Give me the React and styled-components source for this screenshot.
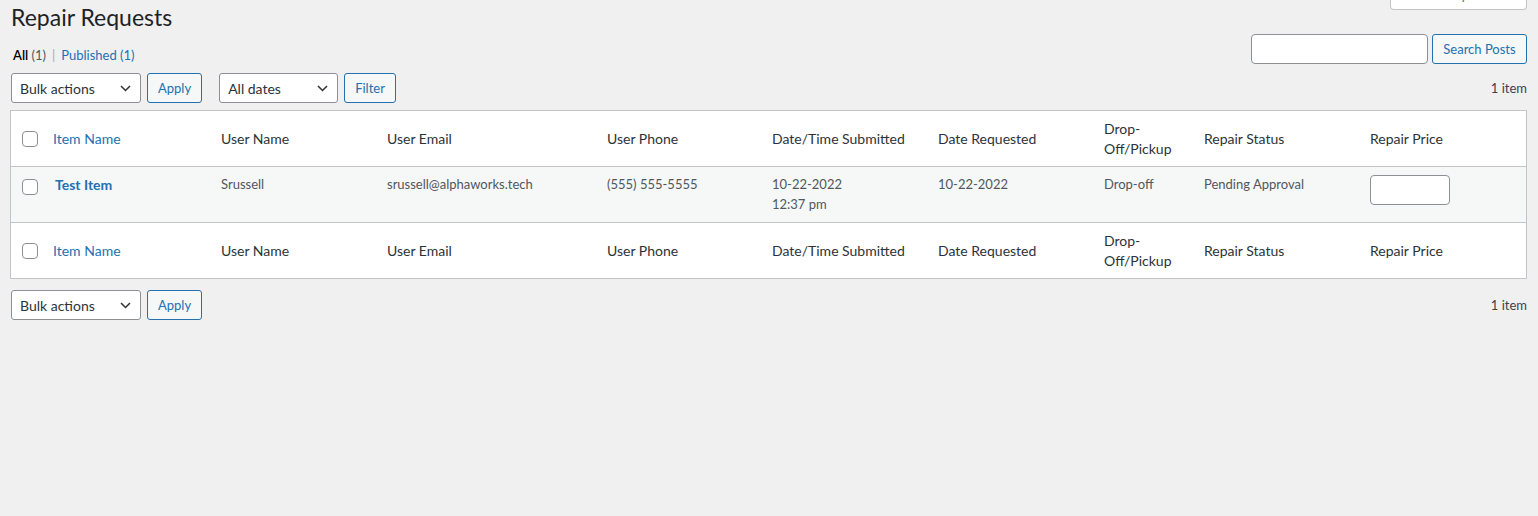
import React from 'react';
import styled, { createGlobalStyle } from 'styled-components';

const Global = createGlobalStyle`
  html, body { margin: 0; padding: 0; background: #f0f0f1; }
  body { font-family: Lato, "Liberation Sans", sans-serif; color: #3c434a; font-size: 13px; }
  * { box-sizing: border-box; }
`;

const Wrap = styled.div`
  padding: 0 11px 0 10px;
`;

const HeaderRow = styled.div`
  display: flex;
  justify-content: space-between;
  align-items: flex-start;
  height: 34px;
`;

const Title = styled.h1`
  margin: 2px 0 0 1px;
  font-size: 23px;
  font-weight: 400;
  line-height: 30px;
  color: #1d2327;
`;

const ScreenTab = styled.button`
  margin-top: -20px;
  width: 137px;
  height: 30px;
  background: #fff;
  border: 1px solid #c3c4c7;
  border-top: none;
  border-radius: 0 0 4px 4px;
  font-family: inherit;
  font-size: 13px;
  line-height: 26px;
  color: #646970;
  padding: 0;
`;

const SubRow = styled.div`
  display: flex;
  justify-content: space-between;
  align-items: flex-start;
  height: 30px;
`;

const Subsub = styled.ul`
  display: flex;
  list-style: none;
  margin: 12px 0 0 3px;
  padding: 0;
  font-size: 13px;
  line-height: 18px;
  color: #646970;
`;

const SubItem = styled.li`
  white-space: pre;
`;

const SubLink = styled.a`
  color: ${p => (p.$current ? '#000' : '#2271b1')};
  font-weight: ${p => (p.$current ? 600 : 400)};
  text-decoration: none;
`;

const Count = styled.span`
  color: ${p => (p.$current ? '#50575e' : '#2271b1')};
  font-weight: 400;
`;

const Sep = styled.span`
  color: #a7aaad;
  padding: 0 6px;
`;

const SearchBox = styled.div`
  display: flex;
  gap: 4px;
`;

const TextInput = styled.input`
  width: ${p => p.$w}px;
  height: 30px;
  border: 1px solid #8c8f94;
  border-radius: 4px;
  background: #fff;
  padding: 0 8px;
  font-family: inherit;
  font-size: 14px;
  margin: 0;
`;

const Button = styled.button`
  height: 30px;
  padding: 0 10px;
  border: 1px solid #2271b1;
  border-radius: 3px;
  background: #f6f7f7;
  color: #2271b1;
  font-family: inherit;
  font-size: 13px;
  line-height: 28px;
  white-space: nowrap;
  min-width: ${p => p.$w || 0}px;
  margin: 0;
`;

const TableNav = styled.div`
  display: flex;
  align-items: center;
  height: 30px;
  padding-left: 1px;
  margin-top: ${p => p.$top}px;
`;

const Actions = styled.div`
  display: flex;
  align-items: center;
  gap: 6px;
  margin-right: 17px;
`;

const Select = styled.div`
  display: flex;
  align-items: center;
  justify-content: space-between;
  width: ${p => p.$w}px;
  height: 30px;
  padding: 0 9px 0 8px;
  border: 1px solid #8c8f94;
  border-radius: 3px;
  background: #fff;
  font-size: 14px;
  color: #2c3338;
`;

const Chevron = () => (
  <svg width="11" height="7" viewBox="0 0 11 7" fill="none">
    <polyline points="1,1 5.5,5.5 10,1" stroke="#2c3338" strokeWidth="1.5" />
  </svg>
);

const Items = styled.div`
  margin-left: auto;
  font-size: 13px;
  color: #3c434a;
`;

const Table = styled.table`
  width: 100%;
  margin-top: 7px;
  table-layout: fixed;
  border-collapse: separate;
  border-spacing: 0;
  border: 1px solid #c3c4c7;
  background: #fff;
`;

const Col = styled.col`
  width: ${p => p.$w}px;
`;

const Th = styled.th`
  text-align: left;
  vertical-align: middle;
  font-weight: 400;
  font-size: 14px;
  line-height: 19.5px;
  color: #2c3338;
  padding: 8px 10px;
  border-bottom: ${p => (p.$foot ? 'none' : '1px solid #c3c4c7')};
  border-top: ${p => (p.$foot ? '1px solid #c3c4c7' : 'none')};
`;

const CheckTh = styled(Th)`
  padding: 0 0 0 11px;
`;

const SortLink = styled.a`
  color: #2271b1;
  text-decoration: none;
`;

const Row = styled.tr`
  background: #f6f7f7;
`;

const Td = styled.td`
  vertical-align: top;
  font-size: 13px;
  line-height: 19.5px;
  color: #50575e;
  padding: 8px 10px;
`;

const CheckTd = styled.th`
  vertical-align: top;
  text-align: left;
  padding: 12px 0 0 11px;
`;

const PrimaryTd = styled(Td)`
  padding-left: 12px;
`;

const RowTitle = styled.a`
  font-size: 14px;
  font-weight: 700;
  color: #2271b1;
  text-decoration: none;
`;

const Checkbox = styled.input.attrs({ type: 'checkbox' })`
  appearance: none;
  display: block;
  width: 16px;
  height: 16px;
  margin: 0;
  border: 1px solid #8c8f94;
  border-radius: 4px;
  background: #fff;
`;

const PriceInput = styled(TextInput)`
  display: block;
`;

const widths = [32, 168, 166, 220, 165, 166, 166, 100, 166, 166];

const headings = [
  'User Name',
  'User Email',
  'User Phone',
  'Date/Time Submitted',
  'Date Requested',
  'Drop-Off/Pickup',
  'Repair Status',
  'Repair Price',
];

const HeadRow = ({ foot }) => (
  <tr>
    <CheckTh $foot={foot}>
      <Checkbox />
    </CheckTh>
    <Th $foot={foot}>
      <SortLink href="#">Item Name</SortLink>
    </Th>
    {headings.map(h => (
      <Th key={h} $foot={foot}>{h}</Th>
    ))}
  </tr>
);

export default function App() {
  return (
    <Wrap>
      <Global />
      <HeaderRow>
        <Title>Repair Requests</Title>
        <ScreenTab>Screen Options ▾</ScreenTab>
      </HeaderRow>
      <SubRow>
        <Subsub>
          <SubItem>
            <SubLink $current href="#">All <Count $current>(1)</Count></SubLink>
            <Sep>|</Sep>
          </SubItem>
          <SubItem>
            <SubLink href="#">Published <Count>(1)</Count></SubLink>
          </SubItem>
        </Subsub>
        <SearchBox>
          <TextInput $w={177} />
          <Button $w={95}>Search Posts</Button>
        </SearchBox>
      </SubRow>

      <TableNav $top={9}>
        <Actions>
          <Select $w={130}>Bulk actions<Chevron /></Select>
          <Button $w={55}>Apply</Button>
        </Actions>
        <Actions>
          <Select $w={119}>All dates<Chevron /></Select>
          <Button $w={51}>Filter</Button>
        </Actions>
        <Items>1 item</Items>
      </TableNav>

      <Table>
        <colgroup>
          {widths.map((w, i) => (
            <Col key={i} $w={w} />
          ))}
        </colgroup>
        <thead>
          <HeadRow />
        </thead>
        <tbody>
          <Row>
            <CheckTd>
              <Checkbox />
            </CheckTd>
            <PrimaryTd>
              <RowTitle href="#">Test Item</RowTitle>
            </PrimaryTd>
            <Td>Srussell</Td>
            <Td>srussell@alphaworks.tech</Td>
            <Td>(555) 555-5555</Td>
            <Td>10-22-2022<br />12:37 pm</Td>
            <Td>10-22-2022</Td>
            <Td>Drop-off</Td>
            <Td>Pending Approval</Td>
            <Td>
              <PriceInput $w={80} />
            </Td>
          </Row>
        </tbody>
        <tfoot>
          <HeadRow foot />
        </tfoot>
      </Table>

      <TableNav $top={11}>
        <Actions>
          <Select $w={130}>Bulk actions<Chevron /></Select>
          <Button $w={55}>Apply</Button>
        </Actions>
        <Items>1 item</Items>
      </TableNav>
    </Wrap>
  );
}
